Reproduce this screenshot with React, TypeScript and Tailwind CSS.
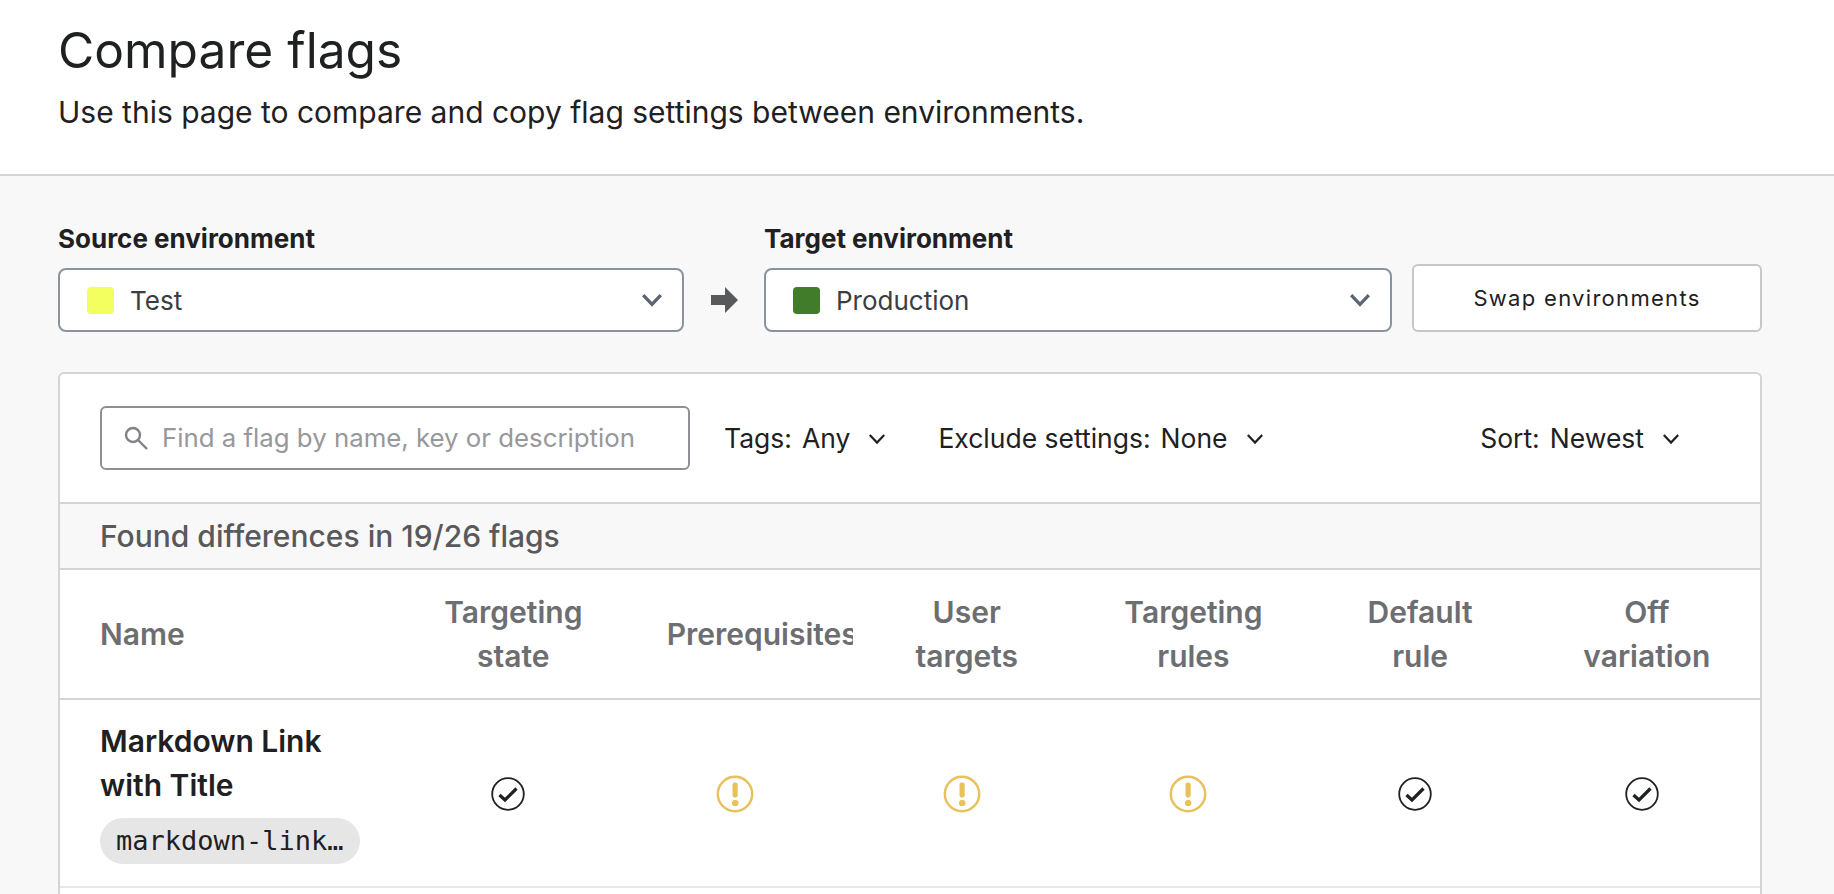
const Chevron = ({ size = 20, color = "#5c6573", sw = 3 }: { size?: number; color?: string; sw?: number }) => (
  <svg width={size} height={size} viewBox="0 0 20 20" fill="none" stroke={color} strokeWidth={sw}>
    <path d="M2 5.5 L10 14 L18 5.5" />
  </svg>
);

const Check = () => (
  <svg width="34" height="34" viewBox="0 0 34 34" fill="none" className="mr-[10px]">
    <circle cx="17" cy="17" r="15.8" stroke="#1f2022" strokeWidth="1.8" />
    <path d="M8.5 18 L14 23 L25.5 11.5" stroke="#1f2022" strokeWidth="3.2" />
  </svg>
);

const Warn = () => (
  <svg width="38" height="38" viewBox="0 0 38 38" fill="none" className="mr-[10px]">
    <circle cx="19" cy="19" r="17.2" stroke="#e8c15a" strokeWidth="2.4" />
    <rect x="16.5" y="7.5" width="5.2" height="15" rx="2.2" fill="#e8c15a" />
    <rect x="16" y="25" width="6.4" height="6" rx="2.8" fill="#e8c15a" />
  </svg>
);

const EnvSelect = ({ color, name, w }: { color: string; name: string; w: string }) => (
  <div className={`flex h-[64px] items-center rounded-lg border-2 border-[#8b93a1] bg-white pl-[27px] pr-[19px] ${w}`}>
    <span className="h-[27px] w-[27px] rounded-[4px]" style={{ backgroundColor: color }} />
    <span className="ml-[16px] flex-1 text-[26px] text-[#3a3d41]">{name}</span>
    <Chevron size={22} />
  </div>
);

const Filter = ({ label, value, className = "" }: { label: string; value: string; className?: string }) => (
  <div className={`flex items-center pt-[2px] text-[26.5px] text-[#1f2022] ${className}`}>
    <span>{label}</span>
    <span className="ml-[10px]">{value}</span>
    <span className="ml-[18px]"><Chevron size={18} color="#1f2022" sw={2.4} /></span>
  </div>
);

const heads = [["Targeting", "state"], ["Prerequisites"], ["User", "targets"], ["Targeting", "rules"], ["Default", "rule"], ["Off", "variation"]];
const icons = [Check, Warn, Warn, Warn, Check, Check];

export default function App() {
  return (
    <div className="h-[894px] w-full overflow-hidden bg-[#f8f8f8] font-['Inter',sans-serif]">
      <header className="h-[176px] border-b-2 border-[#d3d4d6] bg-white pl-[58px] pt-[21px]">
        <h1 className="text-[49.7px] leading-[58px] font-normal text-[#1f2022]">Compare flags</h1>
        <p className="mt-[12px] text-[30px] leading-[42px] text-[#1f2022]">Use this page to compare and copy flag settings between environments.</p>
      </header>
      <main className="pl-[58px] pr-[72px] pt-[45px]">
        <div className="flex items-end">
          <div>
            <div className="mb-[11px] text-[26px] leading-[36px] font-bold text-[#1f2022]">Source environment</div>
            <EnvSelect color="#f2ff5e" name="Test" w="w-[626px]" />
          </div>
          <div className="flex h-[64px] w-[80px] items-center justify-center">
            <svg width="27" height="26" viewBox="0 0 27 26" fill="#58595b"><path d="M0 8 H14 V0 L27 13 L14 26 V18 H0 Z" /></svg>
          </div>
          <div>
            <div className="mb-[11px] text-[26px] leading-[36px] font-bold text-[#1f2022]">Target environment</div>
            <EnvSelect color="#417c2a" name="Production" w="w-[628px]" />
          </div>
          <button className="ml-[20px] flex h-[68px] w-[350px] items-center justify-center rounded-[6px] border-2 border-[#c6c7c9] bg-white text-[22px] tracking-[1.3px] text-[#1f2022]">Swap environments</button>
        </div>
        <section className="mt-[40px] rounded-t-[6px] border-2 border-b-0 border-[#d3d4d6] bg-white">
          <div className="flex h-[128px] items-center pl-[40px] pr-[80px]">
            <div className="flex h-[64px] w-[590px] items-center rounded-[6px] border-2 border-[#8e9094] bg-white pl-[22px]">
              <svg width="24" height="24" viewBox="0 0 24 24" fill="none" stroke="#808285" strokeWidth="2.4"><circle cx="9" cy="9" r="7" /><path d="M14 14 L23 23" /></svg>
              <span className="ml-[14px] w-[473px] overflow-hidden text-[25.8px] whitespace-nowrap text-[#96989b]">Find a flag by name, key or description</span>
            </div>
            <Filter label="Tags:" value="Any" className="ml-[34px]" />
            <Filter label="Exclude settings:" value="None" className="ml-[52px]" />
            <Filter label="Sort:" value="Newest" className="ml-auto" />
          </div>
          <div className="flex h-[68px] items-center border-y-2 border-[#d3d4d6] bg-[#f8f8f8] pl-[40px] text-[30px] font-medium text-[#58595b]">Found differences in 19/26 flags</div>
          <div className="grid h-[130px] grid-cols-[340px_repeat(6,226.7px)] items-center border-b-2 border-[#d3d4d6] text-[30px] leading-[44px] font-semibold text-[#6d6e71]">
            <div className="pl-[40px]">Name</div>
            {heads.map((h, i) => (
              <div key={i} className={`overflow-hidden px-[40px] ${h.length === 1 ? "text-left" : "text-center"}`}>
                {h.map((t) => <div key={t} className="whitespace-nowrap">{t}</div>)}
              </div>
            ))}
          </div>
          <div className="grid h-[188px] grid-cols-[340px_repeat(6,226.7px)] items-center border-b-2 border-[#e6e7e8]">
            <div className="self-start pl-[40px] pt-[19px]">
              <div className="w-[260px] text-[30px] leading-[44px] font-semibold text-[#1f2022]">Markdown Link with Title</div>
              <div className="mt-[11px] h-[46px] w-[260px] truncate rounded-[23px] bg-[#e6e6e6] px-[16px] font-['DejaVu_Sans_Mono',monospace] text-[27px] leading-[46px] text-[#1f2022]">markdown-link-with-title</div>
            </div>
            {icons.map((I, i) => <div key={i} className="flex justify-center pt-[2px]"><I /></div>)}
          </div>
          <div className="h-[60px]" />
        </section>
      </main>
    </div>
  );
}
